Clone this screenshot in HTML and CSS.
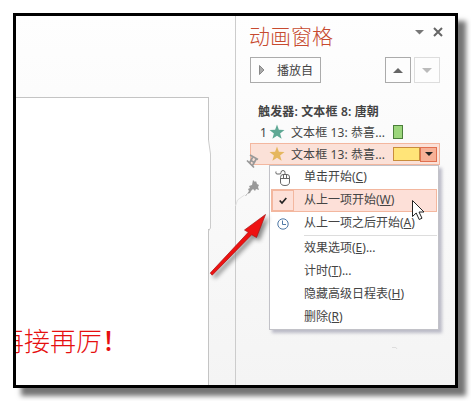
FILE: index.html
```
<!DOCTYPE html>
<html lang="zh-CN">
<head>
    <meta charset="UTF-8">
    <title>动画窗格</title>
    <link rel="stylesheet" href="styles.css">
</head>
<body>
    <div class="window">
        <div class="workspace">
            <div class="slide">
                <div class="slide-text">再接再厉<b>！</b></div>
            </div>
        </div>
        <div class="pane">
            <div class="pane-header">
                <div class="title">动画窗格</div>
                <svg class="pane-controls" width="30" height="12" viewBox="0 0 30 12">
                    <path d="M1 4h9L5.500 8.500z" fill="#777"/>
                    <path d="M20 2l8 8M28 2l-8 8" stroke="#666" stroke-width="2"/>
                </svg>
            </div>
            <div class="toolbar">
                <button class="play-button">
                    <svg width="8" height="12" viewBox="0 0 8 12"><path d="M1.500 1.500v9L6 6z" fill="#aaa" stroke="#888"/></svg>
                    <span>播放自</span>
                </button>
                <button class="move-button"><svg width="10" height="5"><path d="M0 5h10L5 0z" fill="#666"/></svg></button>
                <button class="move-button disabled"><svg width="10" height="5"><path d="M0 0h10L5 5z" fill="#bbb"/></svg></button>
            </div>
            <div class="trigger">触发器: 文本框 8: 唐朝</div>
            <div class="item">
                <span class="number">1</span>
                <svg class="star" width="16" height="16" viewBox="0 0 16 16"><path d="M8 .5l1.900 5.200 5.600.2-4.400 3.500 1.500 5.400L8 11.700l-4.600 3.100 1.500-5.400L.5 5.900l5.600-.2z" fill="#5fa894"/></svg>
                <span class="name">文本框 13: 恭喜...</span>
                <span class="bar green"></span>
            </div>
            <div class="item selected">
                <span class="number"></span>
                <svg class="star" width="16" height="16" viewBox="0 0 16 16"><path d="M8 .5l1.900 5.200 5.600.2-4.400 3.500 1.500 5.400L8 11.700l-4.600 3.100 1.500-5.400L.5 5.900l5.600-.2z" fill="#e5b75e"/></svg>
                <span class="name">文本框 13: 恭喜...</span>
                <span class="bar yellow"></span>
                <span class="drop"><svg width="8" height="4"><path d="M0 0h8L4 4z" fill="#222"/></svg></span>
            </div>
        </div>

        <div class="menu">
            <div class="menu-item">
                <span class="icon"><svg width="16" height="18" viewBox="0 0 16 18" fill="none" stroke="#666"><path d="M5.500 8.500v4.500q0 3.500 4.500 3.500t4.500-3.500V8q0-2.500-2.500-2.500H8Q5.500 5.500 5.500 8.500zM5.500 9.500h9M8.500 9.500v-4M11.500 9.500v-4M10 5.500v-2q0-2-2-2t-2 2-2 1.500H1.500q-1-1-.5-2.500"/></svg></span>
                <span>单击开始(<u>C</u>)</span>
            </div>
            <div class="menu-item active">
                <span class="icon checked"><svg width="8" height="8" viewBox="0 0 8 8"><path d="M.7 3.500L3 6l4.300-5" fill="none" stroke="#222" stroke-width="1.700"/></svg></span>
                <span>从上一项开始(<u>W</u>)</span>
            </div>
            <div class="menu-item">
                <span class="icon"><svg width="12" height="12" viewBox="0 0 12 12" fill="none" stroke="#4f78a5"><circle cx="6" cy="6" r="5.200"/><path d="M5.500 2.500v4H9"/></svg></span>
                <span>从上一项之后开始(<u>A</u>)</span>
            </div>
            <div class="separator"></div>
            <div class="menu-item"><i class="icon"></i><span>效果选项(<u>E</u>)...</span></div>
            <div class="menu-item"><i class="icon"></i><span>计时(<u>T</u>)...</span></div>
            <div class="menu-item"><i class="icon"></i><span>隐藏高级日程表(<u>H</u>)</span></div>
            <div class="menu-item"><i class="icon"></i><span>删除(<u>R</u>)</span></div>
        </div>

        <!-- torn edges, stray marks, red arrow, mouse pointer -->
        <svg class="overlay" width="471" height="401" viewBox="0 0 471 401">
            <path d="M208 140h1l1.500 14v75H208z" fill="#fff"/>
            <path d="M208.500 140l2 14v74l-2 3" fill="none" stroke="#ccc"/>
            <path d="M235.500 206l2-6 7-5" fill="none" stroke="#e2e2e2"/>
            <g fill="none" stroke="#999" stroke-width="1.700">
                <path d="M250 155l8 4.500M247 160.500l7 7M252.500 157.500l-3 5.500M256.500 158.500l-4 7M251 160.500l4 2.500"/>
            </g>
            <path d="M253 180l2 2 1-1 1 3 2 1-1 2 1 3-3-1-1 2-2-2-2 2-1 2-3 1 2-3-1-2 2-1-1-2 3-1z" fill="#999"/>
            <path d="M247 194l-1.500 2" stroke="#bbb"/>
            <path d="M392 347.500h4l1 1.500" fill="none" stroke="#ddd"/>
            <g class="arrow" fill="#ee1212" stroke="#a51515" stroke-width=".7">
                <path d="M210.200 273.100L248.300 232.300 244.500 230 265.500 214.500 256.500 237.500 251.700 234.700 212.200 275.200z"/>
            </g>
            <path d="M412.500 200.500v16l3.700-3.500 3 6.500 2.800-1.300-3-6.200h5z" fill="#fff" stroke="#222"/>
        </svg>
    </div>
</body>
</html>
```

FILE: styles.css
```
* {
    box-sizing: border-box;
}
body {
    margin: 0;
    padding: 13px;
    background: #fff;
    font-family: "Noto Sans", "Noto Sans CJK SC", sans-serif;
    font-size: 12px;
    color: #444;
}
.window {
    display: flex;
    position: relative;
    width: 445px;
    height: 375px;
    border: 3px solid #000;
    box-shadow: 8px 8px 5px #757575;
}
.workspace {
    width: 220px;
    padding-top: 81px;
    overflow: hidden;
    background: linear-gradient(#fefefe, #f4f4f4);
    border-right: 1px solid #ccc;
}
.slide {
    width: 193px;
    height: 288px;
    padding-top: 224px;
    overflow: hidden;
    background: #fff;
    border-top: 1px solid #c4c4c4;
    border-right: 1px solid #c4c4c4;
}
.slide-text {
    margin-left: -18px;
    font-family: "Noto Sans CJK SC", sans-serif;
    font-size: 26px;
    font-weight: 300;
    line-height: 36px;
    white-space: nowrap;
    color: #e60f0f;
}
.slide-text b {
    font-weight: 500;
}
.pane {
    flex: 1;
    padding: 6px 15px 0 13px;
    background: linear-gradient(#fefefe, #f4f4f4);
}
.pane-header {
    display: flex;
    justify-content: space-between;
    height: 35px;
}
.title {
    font-size: 21px;
    line-height: 28px;
    font-weight: 300;
    color: #c74a2f;
}
.pane-controls {
    margin: 4px -4px 0 0;
}
.toolbar {
    display: flex;
    gap: 3px;
    height: 26px;
    margin-left: 1px;
}
.play-button,
.move-button {
    display: flex;
    align-items: center;
    padding: 0;
    border: 1px solid #ababab;
    background: #fdfdfd;
    font: inherit;
    color: #444;
}
.play-button {
    gap: 11px;
    width: 71px;
    padding-left: 7px;
    margin-right: auto;
}
.play-button span {
    margin-top: -1px;
}
.move-button {
    justify-content: center;
    width: 26px;
}
.disabled {
    border-color: #ddd;
}
.trigger {
    margin-top: 18px;
    padding: 1px 0 0 9px;
    height: 20px;
    line-height: 20px;
    font-weight: 600;
    letter-spacing: .15px;
    white-space: nowrap;
}
.item {
    display: flex;
    align-items: center;
    height: 22px;
    margin-left: 1px;
    border: 1px solid transparent;
    white-space: nowrap;
}
.selected {
    background: #fbe1d8;
    border-color: #f3b79f;
}
.number {
    width: 18px;
    padding-left: 9px;
}
.star {
    width: 16px;
}
.name {
    width: 102px;
    padding-left: 6px;
    letter-spacing: .1px;
}
.bar {
    height: 14px;
    margin-left: 6px;
}
.green {
    width: 10px;
    background: #9cd67c;
    border: 1px solid #4b7f3b;
}
.yellow {
    width: 27px;
    background: #ffe478;
    border: 1px solid #c98d3c;
}
.drop {
    display: flex;
    align-items: center;
    justify-content: center;
    width: 17px;
    height: 15px;
    background: #f7b197;
    border: 1px solid #e07050;
}
.menu {
    position: absolute;
    left: 253px;
    top: 149px;
    width: 170px;
    height: 165px;
    padding: 0 1px;
    background: #fff;
    border: 1px solid #c2c2c8;
    box-shadow: 3px 3px 3px rgba(100, 100, 130, .4);
}
.menu-item {
    display: flex;
    align-items: center;
    height: 23px;
    line-height: 21px;
    border: 1px solid transparent;
    white-space: nowrap;
}
.menu-item > span:last-child {
    margin-top: -2px;
}
.active {
    background: #fde0d8;
    border-color: #f3b79f;
}
.icon {
    display: flex;
    align-items: center;
    justify-content: center;
    width: 22px;
    height: 21px;
    margin-right: 10px;
}
.checked {
    border: 1px solid #f3b79f;
}
.separator {
    height: 1px;
    margin: 0 0 1px 33px;
    background: #ddd;
}
.overlay {
    position: absolute;
    left: -16px;
    top: -16px;
}
.arrow {
    filter: drop-shadow(3px 3px 2px #888);
}
```
